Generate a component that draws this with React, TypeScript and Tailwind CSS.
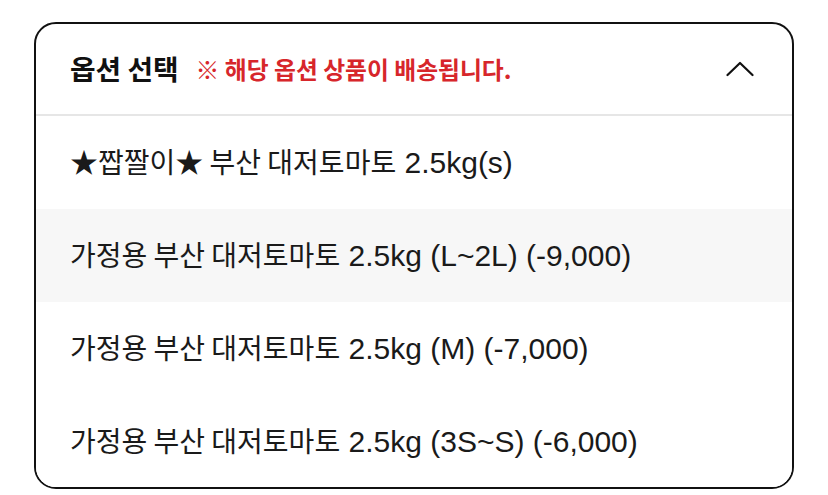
import React from "react";

const items = [
  "★짭짤이★ 부산 대저토마토 2.5kg(s)",
  "가정용 부산 대저토마토 2.5kg (L~2L) (-9,000)",
  "가정용 부산 대저토마토 2.5kg (M) (-7,000)",
  "가정용 부산 대저토마토 2.5kg (3S~S) (-6,000)",
];

const KR = '"Noto Sans CJK KR", "Noto Sans", sans-serif';
const LAT = '"Liberation Sans", Arial, sans-serif';

function Mixed({ text }: { text: string }) {
  const parts = text.split(/([\uAC00-\uD7A3\u2605 ]*[\uAC00-\uD7A3\u2605]+)/).filter((p) => p.length > 0);
  return (
    <>
      {parts.map((p, i) =>
        /[\uAC00-\uD7A3\u2605]/.test(p) ? (
          <span key={i} className="text-[28px]" style={{ fontFamily: KR }}>
            {p}
          </span>
        ) : (
          <span key={i} className="text-[30px]" style={{ fontFamily: LAT }}>
            {p}
          </span>
        )
      )}
    </>
  );
}

export default function App() {
  return (
    <div className="w-[828px] h-[495px] bg-white pt-[22px] px-[34px]" style={{ fontFamily: KR }}>
      <div className="w-[760px] h-[467px] border-2 border-[#111] rounded-[22px] overflow-hidden flex flex-col">
        <div className="h-[92px] flex items-center pl-[34px] pr-[38px] border-b-2 border-[#e6e6e6] shrink-0">
          <span className="text-[27.8px] font-bold text-[#111] leading-none">옵션 선택</span>
          <span className="ml-[17px] text-[23.8px] font-bold text-[#d7262b] leading-none">※ 해당 옵션 상품이 배송됩니다.</span>
          <svg className="ml-auto" width="28" height="16" viewBox="0 0 28 16" fill="none">
            <path d="M1.5 14 L14 2 L26.5 14" stroke="#111" strokeWidth="2.2" strokeLinecap="round" strokeLinejoin="round" />
          </svg>
        </div>
        {items.map((t, i) => (
          <div
            key={i}
            className={`h-[93px] shrink-0 flex items-center pl-[34px] text-[#1a1a1a] whitespace-pre ${i === 1 ? "bg-[#f7f7f7]" : "bg-white"}`}
          >
            <div className="leading-none">
              <Mixed text={t} />
            </div>
          </div>
        ))}
      </div>
    </div>
  );
}
